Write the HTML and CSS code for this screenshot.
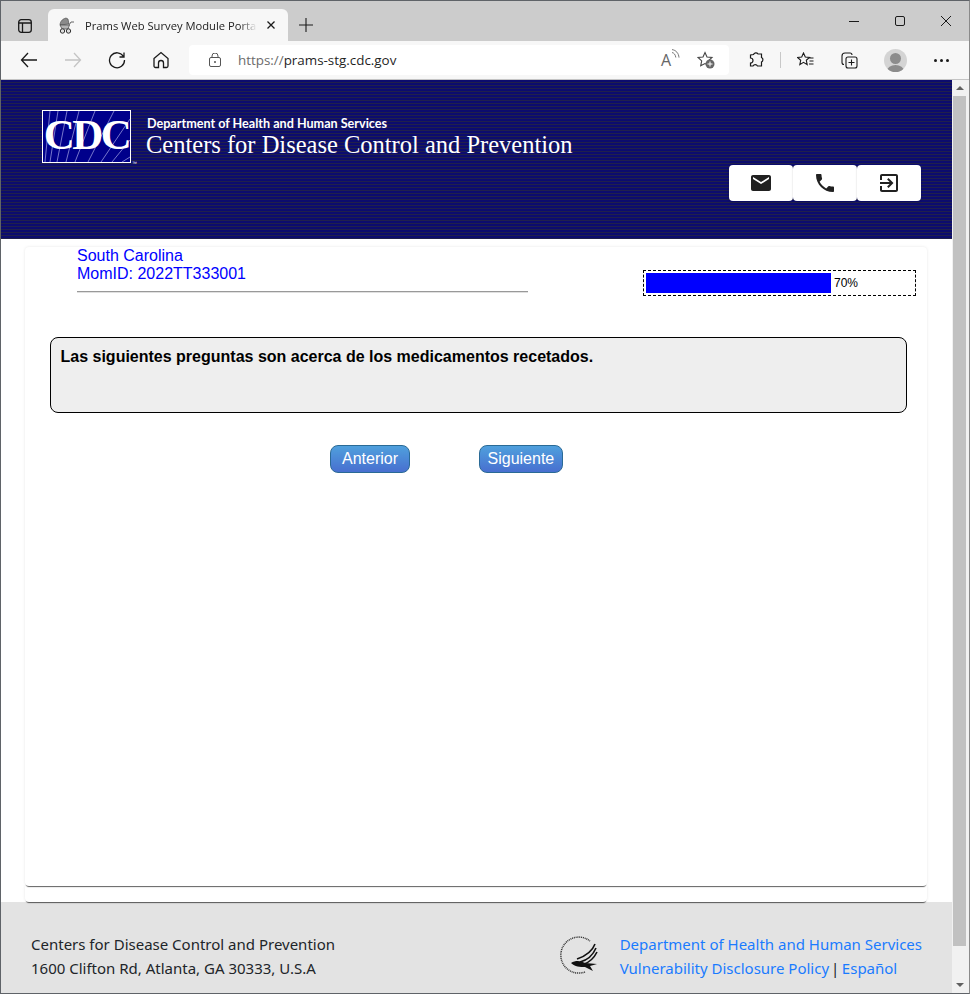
FILE: index.html
```html
<!DOCTYPE html>
<html lang="es">
<head>
  <meta charset="UTF-8" />
  <title>Prams Web Survey Module Portal</title>
  <link rel="stylesheet" href="styles.css">
</head>
<body>
  <div class="window">
    <!-- Browser tab strip -->
    <div class="tabstrip">
      <svg class="tab-actions" width="14" height="14" viewBox="0 0 14 14" fill="none" stroke="#1a1a1a" stroke-width="1.3"><rect x=".7" y=".7" width="12.6" height="12.6" rx="2.500"/><path d="M.7 4h12.600M4.500 4v9.300"/></svg>
      <div class="tab">
        <svg class="favicon" width="17" height="17" viewBox="0 0 17 17"><path d="M2 8c0-3 2-6 6-7l2 1 1 5z" fill="#8a8a8a" stroke="#444" stroke-width=".6"/><path d="M2 8h9.500l-1.500 4H4z" fill="#b5b5b5" stroke="#444" stroke-width=".7"/><path d="M11 8l2-3h3" fill="none" stroke="#666"/><circle cx="4.500" cy="14" r="2.200" fill="#ddd" stroke="#333"/><circle cx="10.500" cy="14" r="2.200" fill="#ddd" stroke="#333"/></svg>
        <span class="tab-title">Prams Web Survey Module Portal</span>
        <svg width="8" height="8" viewBox="0 0 8 8" stroke="#1a1a1a" stroke-width="1.300"><path d="M.5.5l7 7M7.500.5l-7 7"/></svg>
      </div>
      <svg class="new-tab" width="14" height="14" viewBox="0 0 14 14" stroke="#1a1a1a" stroke-width="1.100"><path d="M7 0v14M0 7h14"/></svg>
      <div class="win-controls">
        <svg width="10" height="10" viewBox="0 0 10 10" stroke="#1a1a1a"><path d="M0 5.500h10"/></svg>
        <svg width="10" height="10" viewBox="0 0 10 10" fill="none" stroke="#1a1a1a"><rect x=".5" y=".5" width="9" height="9" rx="1.500"/></svg>
        <svg width="10" height="10" viewBox="0 0 10 10" stroke="#1a1a1a"><path d="M0 0l10 10M10 0L0 10"/></svg>
      </div>
    </div>

    <!-- Browser toolbar -->
    <div class="toolbar">
      <svg class="nav-icon" width="18" height="18" viewBox="0 0 18 18" fill="none" stroke="#1a1a1a" stroke-width="1.300"><path d="M17 9H1.500M8 2L1.500 9 8 16"/></svg>
      <svg class="nav-icon" width="18" height="18" viewBox="0 0 18 18" fill="none" stroke="#c4c4c4" stroke-width="1.300"><path d="M1 9h15.500M10 2l6.500 7-6.500 7"/></svg>
      <svg class="nav-icon" width="18" height="18" viewBox="0 0 18 18" fill="none" stroke="#1a1a1a" stroke-width="1.300"><path d="M15.500 5.500A7.500 7.500 0 1 0 16.500 9M16 1.500v4.500h-4.500"/></svg>
      <svg class="nav-icon" width="18" height="18" viewBox="0 0 18 18" fill="none" stroke="#1a1a1a" stroke-width="1.300"><path d="M2 7.500L9 1.500l7 6V15a1.500 1.500 0 0 1-1.500 1.500H11.500V12a2.500 2.500 0 0 0-5 0v4.500H3.500A1.500 1.500 0 0 1 2 15z"/></svg>
      <div class="addressbar">
        <svg width="12" height="14" viewBox="0 0 12 14" fill="none" stroke="#555" stroke-width="1"><rect x=".5" y="4.500" width="11" height="9" rx="1.500"/><path d="M3 4.500V3a3 3 0 0 1 6 0v1.500"/><circle cx="6" cy="9" r=".6" fill="#555"/></svg>
        <span class="url"><span class="url-scheme">https://</span>prams-stg.cdc.gov</span>
        <span class="read-aloud">A<svg width="9" height="12" viewBox="0 0 9 12" fill="none" stroke="#666" stroke-width=".9"><path d="M1 .6c4 .5 6.700 3.700 7 8M1 3.500c2 .4 3.500 2.200 3.800 5"/></svg></span>
        <svg width="18" height="18" viewBox="0 0 18 18"><path d="M8 1.500l2 4.500 5 .5-3.700 3.400 1 4.800L8 12.500l-4.300 2.200 1-4.800L1 6.500 6 6z" fill="none" stroke="#444" stroke-width="1.100"/><circle cx="13" cy="13" r="4.500" fill="#666"/><path d="M13 10.500v5M10.500 13h5" stroke="#fff"/></svg>
      </div>
      <div class="toolbar-right">
        <svg width="16" height="16" viewBox="0 0 16 16" fill="none" stroke="#1a1a1a" stroke-width="1.200"><path d="M5.500 2.500a2.500 2.500 0 0 1 4.500-.5h3.500v3.500a2.500 2.500 0 0 1 0 4.500v4h-4a2.500 2.500 0 0 0-4.500 0H2.500v-3a2.500 2.500 0 0 0 0-5V3z"/></svg>
        <span class="toolbar-sep"></span>
        <svg width="18" height="16" viewBox="0 0 18 16" fill="none" stroke="#1a1a1a" stroke-width="1.100"><path d="M6.500 1l1.800 4 4.200.4-3.200 2.900.9 4.300-3.700-2.200-3.700 2.200.9-4.300L.5 5.400 4.700 5zM12.500 6h4M12.500 9h4M12 12h4.500"/></svg>
        <svg class="collections" width="17" height="17" viewBox="0 0 17 17" fill="none" stroke="#1a1a1a" stroke-width="1.100"><path d="M3 12.500A2 2 0 0 1 1 10.500V4a3 3 0 0 1 3-3h5a2 2 0 0 1 2 2"/><rect x="5" y="5" width="11" height="11" rx="2"/><path d="M10.500 7.500v6M7.500 10.500h6"/></svg>
        <span class="avatar"><span class="avatar-head"></span><span class="avatar-body"></span></span>
        <span class="more"><i></i><i></i><i></i></span>
      </div>
    </div>

    <div class="viewport">
      <div class="page">
        <header class="site-header">
          <div class="brand">
            <svg class="cdc-logo" width="96" height="56" viewBox="0 0 96 56">
              <rect x=".5" y=".5" width="88" height="52" fill="#00008b" stroke="#fff"/>
              <g stroke="#a9a9e6" stroke-width=".7">
                <path d="M3 52L8 1M8 52L16 1M15 52L25 1M24 52L37 1M33 52L53 1M46 52L72 1M59 52L88 9M70 52L88 30M80 52L88 47"/>
              </g>
              <text x="44.500" y="39" class="cdc-letters">CDC</text>
              <text x="90" y="55" class="cdc-tm">™</text>
            </svg>
            <div class="brand-text">
              <div class="brand-dept">Department of Health and Human Services</div>
              <div class="brand-name">Centers for Disease Control and Prevention</div>
            </div>
          </div>
          <div class="contact-btns">
            <button class="contact-btn" aria-label="Email"><svg width="24" height="24" viewBox="0 0 24 24" fill="#212121"><path d="M20 4H4c-1.100 0-1.990.9-1.990 2L2 18c0 1.100.9 2 2 2h16c1.100 0 2-.9 2-2V6c0-1.100-.9-2-2-2zm0 4l-8 5-8-5V6l8 5 8-5v2z"/></svg></button>
            <button class="contact-btn" aria-label="Phone"><svg width="24" height="24" viewBox="0 0 24 24" fill="#212121"><path d="M6.620 10.790c1.440 2.830 3.760 5.140 6.590 6.590l2.200-2.200c.27-.27.67-.36 1.020-.24 1.120.37 2.330.57 3.570.57.55 0 1 .45 1 1V20c0 .55-.45 1-1 1-9.390 0-17-7.610-17-17 0-.55.45-1 1-1h3.500c.55 0 1 .45 1 1 0 1.250.2 2.450.57 3.570.11.35.03.74-.25 1.020l-2.200 2.200z"/></svg></button>
            <button class="contact-btn" aria-label="Exit"><svg width="24" height="24" viewBox="0 0 24 24" fill="#212121"><path d="M10.090 15.590L11.500 17l5-5-5-5-1.410 1.410L12.670 11H3v2h9.670l-2.580 2.590zM19 3H5c-1.110 0-2 .9-2 2v4h2V5h14v14H5v-4H3v4c0 1.100.89 2 2 2h14c1.100 0 2-.9 2-2V5c0-1.100-.9-2-2-2z"/></svg></button>
          </div>
        </header>

        <main class="content">
          <section class="card survey-card">
            <div class="survey-top">
              <div class="respondent">
                <div>South Carolina</div>
                <div>MomID: 2022TT333001</div>
              </div>
              <div class="progress">
                <div class="progress-bar"></div>
                <span class="progress-label">70%</span>
              </div>
            </div>
            <div class="question">Las siguientes preguntas son acerca de los medicamentos recetados.</div>
            <div class="survey-nav">
              <button class="nav-btn">Anterior</button>
              <button class="nav-btn nav-btn-next">Siguiente</button>
            </div>
          </section>
          <div class="card spacer-card"></div>
        </main>

        <footer class="site-footer">
          <div class="footer-address">
            <div>Centers for Disease Control and Prevention</div>
            <div>1600 Clifton Rd, Atlanta, GA 30333, U.S.A</div>
          </div>
          <div class="footer-right">
            <svg class="hhs-logo" width="40" height="40" viewBox="0 0 40 40">
              <path d="M25 36A18 18 0 1 1 30 5" fill="none" stroke="#333" stroke-width="1.500" stroke-dasharray="1 .8"/>
              <g fill="none" stroke="#111" stroke-width="1.600">
                <path d="M35 8C32 16 26 20 17 23M36 12C33 19 28 24 20 26M37 16C34 22 30 26 24 28"/>
              </g>
              <path d="M11 27c5-3 10-2 14 0l12 1-7 2 3 5-8-4c-5 0-10 0-14-4z" fill="#111"/>
            </svg>
            <div class="footer-links">
              <div><a href="#">Department of Health and Human Services</a></div>
              <div><a href="#">Vulnerability Disclosure Policy</a><span class="footer-sep">|</span><a href="#">Español</a></div>
            </div>
          </div>
        </footer>
      </div>

      <div class="scrollbar">
        <div class="scroll-up"></div>
        <div class="scroll-thumb"></div>
        <div class="scroll-down"></div>
      </div>
    </div>
  </div>
</body>
</html>
```

FILE: styles.css
```css
html, body {
  margin: 0;
  padding: 0;
}
body {
  font-family: "Liberation Sans", Arial, sans-serif;
  background: #fff;
}
button {
  font-family: inherit;
  cursor: pointer;
}
.window {
  width: 970px;
  height: 994px;
  box-sizing: border-box;
  border: 1px solid #5f6368;
  border-right-color: #8a8a8a;
  display: flex;
  flex-direction: column;
  overflow: hidden;
}

/* Browser chrome */
.tabstrip {
  height: 40px;
  flex: none;
  background: #cccccc;
  display: flex;
  align-items: flex-end;
}
.tab-actions {
  margin: 0 0 8px 17px;
}
.tab {
  width: 240px;
  height: 32px;
  box-sizing: border-box;
  margin-left: 16px;
  padding: 0 12px 0 10px;
  background: #f7f7f7;
  border-radius: 6px 6px 0 0;
  display: flex;
  align-items: center;
}
.tab-title {
  font-family: "Open Sans", "Noto Sans", sans-serif;
  font-size: 11.200px;
  color: #222;
  margin: 0 10px 0 10px;
  width: 172px;
  white-space: nowrap;
  overflow: hidden;
  -webkit-mask-image: linear-gradient(to right, #000 90%, transparent);
  mask-image: linear-gradient(to right, #000 90%, transparent);
}
.new-tab {
  margin: 0 0 9px 11px;
}
.win-controls {
  margin-left: auto;
  margin-right: 18px;
  display: flex;
  gap: 36px;
  align-self: flex-start;
  padding-top: 15px;
}
.toolbar {
  height: 39px;
  flex: none;
  box-sizing: border-box;
  background: #f7f7f7;
  border-bottom: 1px solid #c4c4c4;
  display: flex;
  align-items: center;
  padding-left: 19px;
}
.nav-icon {
  margin-right: 26px;
}
.nav-icon:nth-of-type(4) {
  margin-right: 19px;
}
.addressbar {
  width: 540px;
  height: 30px;
  box-sizing: border-box;
  background: #fff;
  border-radius: 4px;
  display: flex;
  align-items: center;
  padding: 0 14px 0 20px;
  margin-top: -1px;
}
.url {
  font-family: "Open Sans", "Noto Sans", sans-serif;
  font-size: 13.400px;
  color: #1f1f1f;
  margin-left: 17px;
  flex: 1;
}
.url-scheme {
  color: #6b6b6b;
}
.read-aloud {
  font-family: "Open Sans", "Noto Sans", sans-serif;
  font-size: 16px;
  color: #666;
  display: flex;
  align-items: flex-start;
  margin-right: 17px;
}
.toolbar-right {
  display: flex;
  align-items: center;
  margin-left: 19px;
}
.toolbar-sep {
  width: 1px;
  height: 16px;
  background: #c8c8c8;
  margin: 0 16px;
}
.collections {
  margin: 0 26px;
}
.avatar {
  width: 23px;
  height: 23px;
  border-radius: 50%;
  background: #d4d4d4;
  position: relative;
  overflow: hidden;
}
.avatar-head {
  position: absolute;
  left: 6px;
  top: 4px;
  width: 11px;
  height: 11px;
  border-radius: 50%;
  background: #8c8c8c;
}
.avatar-body {
  position: absolute;
  left: 3px;
  top: 16px;
  width: 17px;
  height: 12px;
  border-radius: 50%;
  background: #8c8c8c;
}
.more {
  display: flex;
  gap: 3px;
  margin-left: 27px;
}
.more i {
  width: 3px;
  height: 3px;
  border-radius: 50%;
  background: #1a1a1a;
}

/* Page */
.viewport {
  flex: 1;
  min-height: 0;
  display: flex;
}
.page {
  flex: 1;
  min-width: 0;
  display: flex;
  flex-direction: column;
}
.scrollbar {
  width: 17px;
  flex: none;
  box-sizing: border-box;
  padding-right: 2px;
  background: #f1f1f1;
  display: flex;
  flex-direction: column;
  align-items: center;
}
.scroll-up, .scroll-down {
  width: 0;
  height: 0;
  border-left: 4px solid transparent;
  border-right: 4px solid transparent;
  margin: 6px 0;
}
.scroll-up {
  border-bottom: 4px solid #606060;
}
.scroll-down {
  border-top: 4px solid #606060;
}
.scroll-thumb {
  width: 13px;
  flex: 1;
  background: #c1c1c1;
  margin-bottom: 31px;
}
.site-header {
  height: 159px;
  flex: none;
  box-sizing: border-box;
  padding: 30px 31px 0 41px;
  background: repeating-linear-gradient(to bottom, #0c0c6e 0, #0c0c6e 2px, #20204c 2px, #20204c 3px);
  position: relative;
}
.brand {
  display: flex;
  align-items: flex-start;
}
.cdc-logo {
  flex: none;
}
.cdc-letters {
  font-family: "Liberation Serif", serif;
  font-weight: 700;
  font-size: 43px;
  letter-spacing: -2.500px;
  fill: #fff;
  text-anchor: middle;
}
.cdc-tm {
  font-family: "Liberation Sans", sans-serif;
  font-size: 5px;
  fill: #fff;
}
.brand-text {
  margin-left: 8px;
  color: #fff;
  padding-top: 7px;
}
.brand-dept {
  font-family: "Lato", sans-serif;
  font-weight: 700;
  font-size: 12.600px;
  line-height: 14px;
  margin-left: 1px;
}
.brand-name {
  font-family: "Liberation Serif", serif;
  font-size: 24.500px;
  line-height: 28px;
}
.contact-btns {
  position: absolute;
  right: 31px;
  top: 85px;
  display: flex;
}
.contact-btn {
  width: 64px;
  height: 36px;
  padding: 0;
  border: 0;
  background: #fff;
  border-radius: 4px;
  box-shadow: 0 1px 2px rgba(0, 0, 0, 0.2);
  display: flex;
  align-items: center;
  justify-content: center;
}
.content {
  flex: 1;
  min-height: 0;
  padding: 8px 25px 0 24px;
  display: flex;
  flex-direction: column;
  position: relative;
  z-index: 1;
}
.card {
  background: #fff;
  border-radius: 0 0 4px 4px;
  box-shadow: 0 2px 1px -1px rgba(0, 0, 0, 0.6), 0 0 3px rgba(0, 0, 0, 0.1);
}
.survey-card {
  height: 639px;
  flex: none;
  box-sizing: border-box;
  padding: 0 20px 0 25px;
  border-radius: 4px;
  position: relative;
  z-index: 1;
}
.spacer-card {
  flex: 1;
}
.survey-top {
  display: flex;
  justify-content: space-between;
  align-items: flex-start;
}
.respondent {
  width: 451px;
  margin-left: 27px;
  padding-bottom: 8px;
  border-bottom: 1px solid #999;
  box-shadow: 0 1px 0 rgba(0, 0, 0, 0.12);
  color: #0000ff;
  font-size: 16px;
  line-height: 18px;
}
.progress {
  width: 273px;
  height: 26px;
  box-sizing: border-box;
  margin: 23px -9px 0 0;
  border: 1px dashed #000;
  padding: 2px;
  display: flex;
  align-items: center;
}
.progress-bar {
  width: 185px;
  height: 20px;
  background: #0000ff;
}
.progress-label {
  font-size: 12px;
  margin-left: 3px;
  color: #000;
}
.question {
  height: 76px;
  box-sizing: border-box;
  margin-top: 41px;
  padding: 10px 9.500px;
  background: #eeeeee;
  border: 1px solid #000;
  border-radius: 8px;
  font-size: 16px;
  font-weight: 700;
  line-height: 18px;
  color: #000;
}
.survey-nav {
  display: flex;
  gap: 69px;
  margin: 32px 0 0 280px;
}
.nav-btn {
  height: 28px;
  padding: 0 11px;
  font-size: 16px;
  color: #fff;
  background: linear-gradient(to bottom, #4fa0dd, #486fd0);
  border: 1px solid #2a6a96;
  border-radius: 8px;
}
.nav-btn-next {
  padding: 0 7.500px;
}
.site-footer {
  height: 91px;
  flex: none;
  box-sizing: border-box;
  background: #e3e3e3;
  padding: 30px 30px 0 30px;
  display: flex;
  justify-content: space-between;
  font-family: "Noto Sans", "Open Sans", sans-serif;
  font-size: 15px;
  line-height: 24px;
  color: #212529;
}
.footer-right {
  display: flex;
  align-items: flex-start;
}
.hhs-logo {
  margin: 4px 20px 0 0;
}
.footer-links a {
  color: #1a7bff;
  text-decoration: none;
}
.footer-sep {
  margin: 0 2.500px 0 2px;
}
```
